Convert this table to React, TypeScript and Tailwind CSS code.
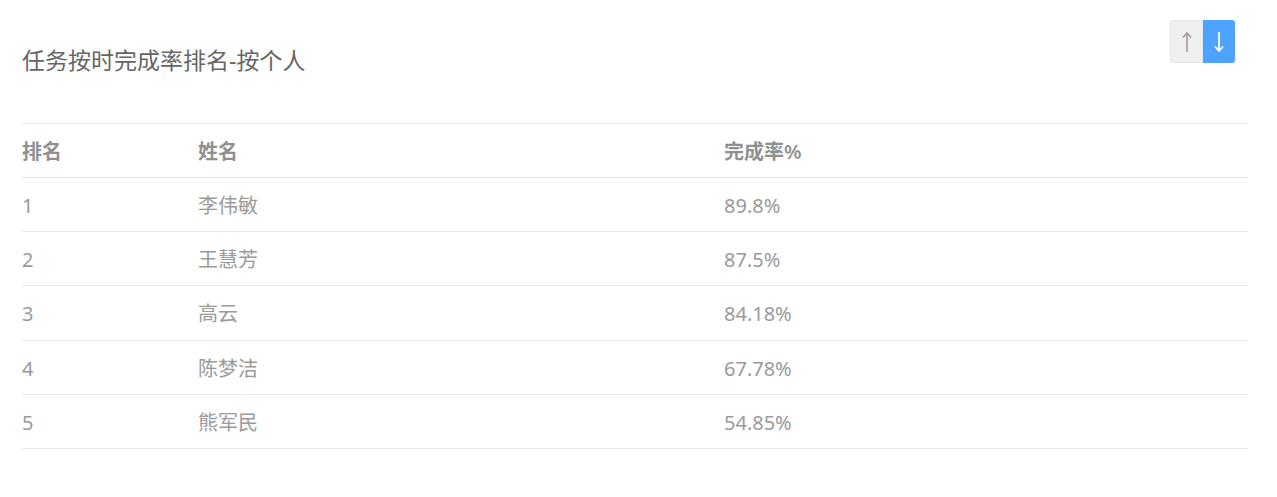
import React from "react";

const rows = [
  { rank: 1, name: "李伟敏", rate: "89.8%" },
  { rank: 2, name: "王慧芳", rate: "87.5%" },
  { rank: 3, name: "高云", rate: "84.18%" },
  { rank: 4, name: "陈梦洁", rate: "67.78%" },
  { rank: 5, name: "熊军民", rate: "54.85%" },
];

export default function App() {
  return (
    <div
      className="w-[1277px] h-[497px] bg-white pl-[22px] pr-[29px]"
      style={{ fontFamily: '"Noto Sans", "Noto Sans CJK SC", sans-serif' }}
    >
      <div className="relative h-[123px]">
        <div className="absolute left-0 top-[44px] text-[23px] leading-[32px] text-[#666666]">
          任务按时完成率排名-按个人
        </div>
        <div className="absolute right-[13px] top-[20px] flex h-[43px]">
          <button className="w-[33px] h-full bg-[#efefef] rounded-l-[3px] flex items-center justify-center border border-[#e6e6e6]">
            <svg width="12" height="24" viewBox="0 0 12 24">
              <path d="M6 22V3M2 7.5L6 3l4 4.5" stroke="#a39d96" strokeWidth="1.6" fill="none" />
            </svg>
          </button>
          <button className="w-[32px] h-full bg-[#4da3ff] rounded-r-[3px] flex items-center justify-center">
            <svg width="12" height="24" viewBox="0 0 12 24">
              <path d="M6 2v19M2 16.5L6 21l4-4.5" stroke="#ffffff" strokeWidth="1.8" fill="none" />
            </svg>
          </button>
        </div>
      </div>
      <div className="border-t border-[#e8e8ec]">
        <div className="flex items-center pt-[3px] h-[54px] border-b border-[#e8e8ec] text-[20px] font-semibold text-[#909090]">
          <div className="w-[176px]">排名</div>
          <div className="w-[526px]">姓名</div>
          <div>完成率%</div>
        </div>
        {rows.map((r) => (
          <div
            key={r.rank}
            className="flex items-center pt-[3px] h-[54.2px] border-b border-[#e8e8ec] text-[20px] text-[#9a9a9a]"
          >
            <div className="w-[176px]">{r.rank}</div>
            <div className="w-[526px]">{r.name}</div>
            <div>{r.rate}</div>
          </div>
        ))}
      </div>
    </div>
  );
}
